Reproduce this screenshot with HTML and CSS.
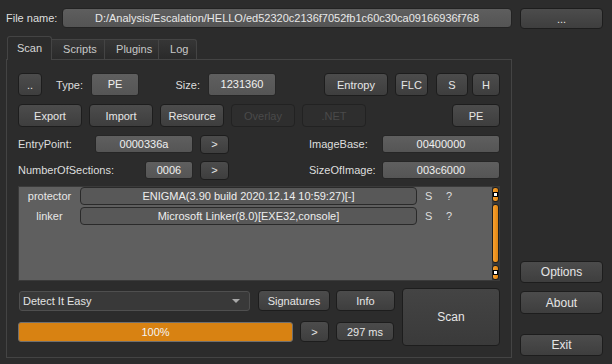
FILE: index.html
```html
<!DOCTYPE html>
<html lang="en">
<head>
  <meta charset="UTF-8" />
  <title>Detect It Easy</title>
  <link rel="stylesheet" href="styles.css">
</head>
<body>
  <div class="app">
    <div class="file-row">
      <span class="file-label">File name:</span>
      <div class="file-field">D:/Analysis/Escalation/HELLO/ed52320c2136f7052fb1c60c30ca09166936f768</div>
      <button class="btn browse">...</button>
    </div>

    <div class="main">
      <div class="tabs-area">
        <div class="tab-bar">
          <div class="tab active">Scan</div>
          <div class="tab">Scripts</div>
          <div class="tab">Plugins</div>
          <div class="tab">Log</div>
        </div>

        <div class="pane">
          <div class="row row-big">
            <button class="btn w-dots">..</button>
            <span class="lbl lbl-type">Type:</span>
            <div class="val val-big w-pe">PE</div>
            <span class="lbl lbl-size">Size:</span>
            <div class="val val-big w-size">1231360</div>
            <span class="spacer"></span>
            <button class="btn w-entropy">Entropy</button>
            <button class="btn w-flc">FLC</button>
            <button class="btn w-s">S</button>
            <button class="btn w-h">H</button>
          </div>

          <div class="row row-big row-gap">
            <button class="btn w-64">Export</button>
            <button class="btn w-64">Import</button>
            <button class="btn w-64">Resource</button>
            <button class="btn w-64" disabled>Overlay</button>
            <button class="btn w-64" disabled>.NET</button>
            <span class="spacer"></span>
            <button class="btn w-pe2">PE</button>
          </div>

          <div class="row row-small">
            <span class="lbl-left w-ep">EntryPoint:</span>
            <div class="val w-epv">0000336a</div>
            <button class="btn btn-small w-go">&gt;</button>
            <span class="spacer"></span>
            <span class="lbl-left w-rl">ImageBase:</span>
            <div class="val w-rv">00400000</div>
          </div>

          <div class="row row-small">
            <span class="lbl-left w-ns">NumberOfSections:</span>
            <div class="val w-nsv">0006</div>
            <button class="btn btn-small w-go">&gt;</button>
            <span class="spacer"></span>
            <span class="lbl-left w-rl">SizeOfImage:</span>
            <div class="val w-rv">003c6000</div>
          </div>

          <div class="results">
            <div class="result-list">
              <div class="result">
                <span class="r-type">protector</span>
                <div class="r-name">ENIGMA(3.90 build 2020.12.14 10:59:27)[-]</div>
                <span class="r-s">S</span>
                <span class="r-q">?</span>
              </div>
              <div class="result">
                <span class="r-type">linker</span>
                <div class="r-name">Microsoft Linker(8.0)[EXE32,console]</div>
                <span class="r-s">S</span>
                <span class="r-q">?</span>
              </div>
            </div>
            <div class="scrollbar">
              <div class="sb-btn"><i></i></div>
              <div class="sb-handle"></div>
              <div class="sb-btn"><i></i></div>
            </div>
          </div>

          <div class="bottom">
            <div class="bottom-left">
              <div class="row">
                <div class="combo">
                  <span>Detect It Easy</span>
                  <span class="arrow"></span>
                </div>
                <button class="btn btn-mid w-sig">Signatures</button>
                <button class="btn btn-mid w-info">Info</button>
              </div>
              <div class="row">
                <div class="progress">100%</div>
                <button class="btn btn-mid w-go2">&gt;</button>
                <div class="btn btn-mid time">297 ms</div>
              </div>
            </div>
            <button class="btn scan">Scan</button>
          </div>
        </div>
      </div>

      <div class="side">
        <button class="btn side-btn options">Options</button>
        <button class="btn side-btn about">About</button>
        <button class="btn side-btn">Exit</button>
      </div>
    </div>
  </div>
</body>
</html>
```

FILE: styles.css
```css
body {
  margin: 0;
  background-color: #2c2c2c;
  font-family: 'Liberation Sans', Arial, sans-serif;
  font-size: 11px;
  color: #dedede;
}
.app {
  padding: 8px 9px 0 6px;
  width: 597px;
}
.file-row {
  display: flex;
  align-items: flex-start;
  height: 21px;
}
.file-label {
  width: 56px;
  line-height: 21px;
}
.file-field {
  flex: 1;
  height: 18px;
  line-height: 18px;
  text-align: center;
  background: linear-gradient(#5e5e5e, #545454);
  border: 1px solid #232323;
  border-radius: 4px;
  color: #e8e8e8;
  white-space: nowrap;
  overflow: hidden;
}
.btn {
  font-family: inherit;
  font-size: 11px;
  color: #e6e6e6;
  background: linear-gradient(#4c4c4c, #3e3e3e);
  border: 1px solid #1d1d1d;
  border-radius: 4px;
  padding: 0;
  height: 23px;
  display: flex;
  align-items: center;
  justify-content: center;
  box-sizing: border-box;
  flex: none;
}
.btn:disabled {
  background: #2e2e2e;
  border-color: #222;
  color: #4a4a4a;
}
.browse {
  width: 83px;
  height: 21px;
  margin-left: 8px;
}
.main {
  display: flex;
  margin-top: 7px;
}
.tabs-area {
  width: 506px;
}
.tab-bar {
  display: flex;
  align-items: flex-end;
  height: 24px;
  padding-left: 1px;
  margin-bottom: -1px;
  position: relative;
}
.tab {
  height: 20px;
  line-height: 19px;
  margin-bottom: 1px;
  box-sizing: border-box;
  padding: 0 11px;
  background: linear-gradient(#363636, #2a2a2a);
  border: 1px solid #444;
  border-bottom: none;
  border-left: none;
  color: #c8c8c8;
}
.tab.active {
  height: 24px;
  line-height: 22px;
  margin-bottom: 0;
  padding: 0 9px;
  background: #2c2c2c;
  border-left: 1px solid #444;
  border-radius: 3px 3px 0 0;
  color: #d6d6d6;
}
.tab:nth-child(2) { width: 53px; }
.tab:nth-child(3) { width: 54px; }
.tab:nth-child(4) { width: 38px; border-radius: 0 3px 0 0; }
.pane {
  height: 299px;
  box-sizing: border-box;
  border: 1px solid #444;
  padding: 13px 11px 0 11px;
}
.row {
  display: flex;
  align-items: center;
}
.row-big { height: 23px; }
.row-gap { margin-top: 8px; }
.row-small { height: 18px; margin-top: 8px; }
.spacer { flex: 1; }
.val {
  height: 18px;
  line-height: 16px;
  box-sizing: border-box;
  text-align: center;
  background: linear-gradient(#5f5f5f, #555);
  border: 1px solid #262626;
  border-radius: 3px;
  color: #f0f0f0;
  flex: none;
}
.val-big { height: 23px; line-height: 21px; }
.lbl { text-align: right; box-sizing: border-box; padding-right: 8px; }
.lbl-type { width: 49px; }
.lbl-size { width: 69px; }
.lbl-left { flex: none; }
.w-dots { width: 24px; }
.w-pe { width: 48px; }
.w-size { width: 68px; }
.w-entropy { width: 64px; }
.w-flc { width: 33px; margin-left: 7px; }
.w-s { width: 32px; margin-left: 8px; }
.w-h { width: 28px; margin-left: 4px; }
.w-64 { width: 64px; margin-right: 7px; }
.w-pe2 { width: 48px; }
.w-ep { width: 77px; }
.w-epv { width: 98px; }
.w-ns { width: 127px; }
.w-nsv { width: 48px; }
.btn-small { height: 19px; }
.w-go { width: 29px; margin-left: 7px; }
.w-rl { width: 73px; }
.w-rv { width: 118px; }
.results {
  margin-top: 7px;
  height: 95px;
  box-sizing: border-box;
  background: #5f5f5f;
  border: 1px solid #3a3a3a;
  display: flex;
}
.result-list { flex: 1; }
.result {
  display: flex;
  align-items: center;
  height: 18px;
  margin-bottom: 2px;
}
.r-type {
  width: 61px;
  text-align: center;
  color: #e8e8e8;
}
.r-name {
  width: 337px;
  height: 18px;
  line-height: 16px;
  box-sizing: border-box;
  text-align: center;
  background: #585858;
  border: 1px solid #2a2a2a;
  border-radius: 4px;
  color: #eeeeee;
}
.r-s { margin-left: 8px; width: 21px; }
.r-q { width: 10px; }
.scrollbar {
  width: 7px;
  display: flex;
  flex-direction: column;
  background: #3a3a3a;
}
.sb-btn, .sb-handle {
  box-sizing: border-box;
  background: linear-gradient(90deg, #f7a030, #e08512);
  border: 1px solid #1e1e1e;
  border-radius: 3px;
}
.sb-btn {
  height: 15px;
  display: flex;
  align-items: center;
  justify-content: center;
}
.sb-btn i {
  width: 3px;
  height: 3px;
  background: #fff;
  border: 1px solid #000;
}
.sb-handle {
  flex: 1;
  margin: 2px 0;
}
.bottom {
  display: flex;
  margin-top: 7px;
  height: 58px;
}
.bottom-left {
  width: 384px;
  display: flex;
  flex-direction: column;
  justify-content: space-between;
  padding: 2px 0 4px;
  box-sizing: border-box;
}
.bottom-left .row { height: 21px; }
.btn-mid { height: 21px; }
.combo {
  width: 231px;
  height: 20px;
  margin-left: 1px;
  box-sizing: border-box;
  background: #393939;
  border: 1px solid #4f4f4f;
  border-radius: 3px;
  display: flex;
  align-items: center;
  justify-content: space-between;
  padding: 0 9px 0 3px;
  color: #e4e4e4;
}
.arrow {
  width: 0;
  height: 0;
  border-left: 4px solid transparent;
  border-right: 4px solid transparent;
  border-top: 4px solid #a8a8a8;
}
.w-sig { width: 72px; margin-left: 8px; }
.w-info { width: 59px; margin-left: 6px; }
.progress {
  width: 275px;
  height: 20px;
  box-sizing: border-box;
  line-height: 18px;
  text-align: center;
  background: #d88212;
  border: 1px solid #707070;
  border-radius: 3px;
  color: #f4f4f4;
}
.w-go2 { width: 29px; margin-left: 7px; }
.time { width: 58px; height: 19px; margin-left: 7px; background: linear-gradient(#4a4a4a, #414141); }
.scan {
  width: 98px;
  height: 58px;
  margin-left: 7px;
  background: linear-gradient(#444, #3a3a3a);
  font-size: 12px;
}
.side {
  width: 83px;
  margin-left: 8px;
  display: flex;
  flex-direction: column;
  justify-content: flex-end;
  padding-bottom: 2px;
}
.side-btn { width: 83px; height: 22px; font-size: 12px; }
.options { margin-bottom: 8px; }
.about { height: 23px; margin-bottom: 20px; }
```
